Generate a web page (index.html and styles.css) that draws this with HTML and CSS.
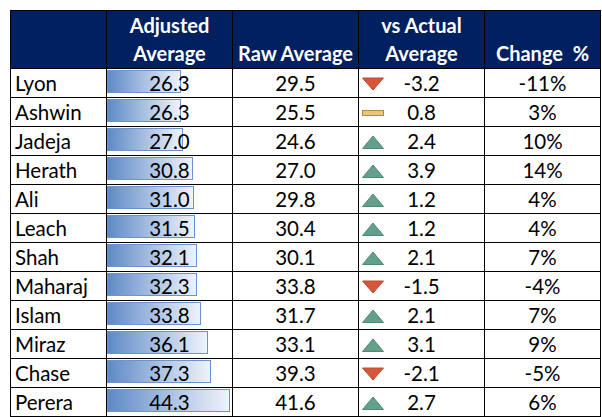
FILE: index.html
```html
<!DOCTYPE html>
<html lang="en">
<head>
<meta charset="utf-8">
<title>Adjusted Average</title>
<link rel="stylesheet" href="styles.css">
</head>
<body>
<div class="sheet">
  <div class="hd hd-name"></div>
  <div class="hd">Adjusted<br>Average</div>
  <div class="hd">Raw Average</div>
  <div class="hd">vs Actual<br>Average</div>
  <div class="hd hd-pre">Change  %</div>

  <div class="c name">Lyon</div>
  <div class="c adj"><span class="bar" style="width:74px"></span><span class="v">26.3</span></div>
  <div class="c">29.5</div>
  <div class="c vs"><svg class="ic" viewBox="0 0 22 16" width="22" height="16"><polygon class="dn" points="0.5,1 21.5,1 11,13"/></svg><span class="v">-3.2</span></div>
  <div class="c">-11%</div>

  <div class="c name">Ashwin</div>
  <div class="c adj"><span class="bar" style="width:74px"></span><span class="v">26.3</span></div>
  <div class="c">25.5</div>
  <div class="c vs"><svg class="ic" viewBox="0 0 22 16" width="22" height="16"><rect class="eq" x="0.5" y="4.5" width="21" height="5"/></svg><span class="v">0.8</span></div>
  <div class="c">3%</div>

  <div class="c name">Jadeja</div>
  <div class="c adj"><span class="bar" style="width:76px"></span><span class="v">27.0</span></div>
  <div class="c">24.6</div>
  <div class="c vs"><svg class="ic" viewBox="0 0 22 16" width="22" height="16"><polygon class="up" points="0.5,13.5 21.5,13.5 11,1"/></svg><span class="v">2.4</span></div>
  <div class="c">10%</div>

  <div class="c name">Herath</div>
  <div class="c adj"><span class="bar" style="width:86px"></span><span class="v">30.8</span></div>
  <div class="c">27.0</div>
  <div class="c vs"><svg class="ic" viewBox="0 0 22 16" width="22" height="16"><polygon class="up" points="0.5,13.5 21.5,13.5 11,1"/></svg><span class="v">3.9</span></div>
  <div class="c">14%</div>

  <div class="c name">Ali</div>
  <div class="c adj"><span class="bar" style="width:87px"></span><span class="v">31.0</span></div>
  <div class="c">29.8</div>
  <div class="c vs"><svg class="ic" viewBox="0 0 22 16" width="22" height="16"><polygon class="up" points="0.5,13.5 21.5,13.5 11,1"/></svg><span class="v">1.2</span></div>
  <div class="c">4%</div>

  <div class="c name">Leach</div>
  <div class="c adj"><span class="bar" style="width:88px"></span><span class="v">31.5</span></div>
  <div class="c">30.4</div>
  <div class="c vs"><svg class="ic" viewBox="0 0 22 16" width="22" height="16"><polygon class="up" points="0.5,13.5 21.5,13.5 11,1"/></svg><span class="v">1.2</span></div>
  <div class="c">4%</div>

  <div class="c name">Shah</div>
  <div class="c adj"><span class="bar" style="width:90px"></span><span class="v">32.1</span></div>
  <div class="c">30.1</div>
  <div class="c vs"><svg class="ic" viewBox="0 0 22 16" width="22" height="16"><polygon class="up" points="0.5,13.5 21.5,13.5 11,1"/></svg><span class="v">2.1</span></div>
  <div class="c">7%</div>

  <div class="c name">Maharaj</div>
  <div class="c adj"><span class="bar" style="width:90px"></span><span class="v">32.3</span></div>
  <div class="c">33.8</div>
  <div class="c vs"><svg class="ic" viewBox="0 0 22 16" width="22" height="16"><polygon class="dn" points="0.5,1 21.5,1 11,13"/></svg><span class="v">-1.5</span></div>
  <div class="c">-4%</div>

  <div class="c name">Islam</div>
  <div class="c adj"><span class="bar" style="width:94px"></span><span class="v">33.8</span></div>
  <div class="c">31.7</div>
  <div class="c vs"><svg class="ic" viewBox="0 0 22 16" width="22" height="16"><polygon class="up" points="0.5,13.5 21.5,13.5 11,1"/></svg><span class="v">2.1</span></div>
  <div class="c">7%</div>

  <div class="c name">Miraz</div>
  <div class="c adj"><span class="bar" style="width:101px"></span><span class="v">36.1</span></div>
  <div class="c">33.1</div>
  <div class="c vs"><svg class="ic" viewBox="0 0 22 16" width="22" height="16"><polygon class="up" points="0.5,13.5 21.5,13.5 11,1"/></svg><span class="v">3.1</span></div>
  <div class="c">9%</div>

  <div class="c name">Chase</div>
  <div class="c adj"><span class="bar" style="width:104px"></span><span class="v">37.3</span></div>
  <div class="c">39.3</div>
  <div class="c vs"><svg class="ic" viewBox="0 0 22 16" width="22" height="16"><polygon class="dn" points="0.5,1 21.5,1 11,13"/></svg><span class="v">-2.1</span></div>
  <div class="c">-5%</div>

  <div class="c name">Perera</div>
  <div class="c adj"><span class="bar" style="width:123px"></span><span class="v">44.3</span></div>
  <div class="c">41.6</div>
  <div class="c vs"><svg class="ic" viewBox="0 0 22 16" width="22" height="16"><polygon class="up" points="0.5,13.5 21.5,13.5 11,1"/></svg><span class="v">2.7</span></div>
  <div class="c">6%</div>
</div>
</body>
</html>
```

FILE: styles.css
```css
html, body {
  margin: 0;
  padding: 0;
  background: #ffffff;
}

body {
  padding: 10px 0 0 10px;
  font-family: Lato, "Liberation Sans", sans-serif;
  color: #000000;
}

.sheet {
  display: grid;
  grid-template-columns: 95px 125px 125px 125px 115px;
  grid-template-rows: 57px repeat(12, 28px);
  gap: 1px;
  padding: 1px;
  width: max-content;
  background: #000000;
}

.hd {
  background: #002060;
  color: #ffffff;
  font-weight: 700;
  font-size: 20px;
  line-height: 28px;
  text-align: center;
  display: flex;
  flex-direction: column;
  justify-content: flex-end;
  padding-bottom: 1px;
}

.hd-pre {
  white-space: pre;
}

.c {
  background: #ffffff;
  font-size: 20.5px;
  line-height: 28px;
  text-align: center;
  white-space: nowrap;
}

.name {
  text-align: left;
  padding-left: 4px;
}

.adj {
  display: grid;
}

.adj > .bar,
.adj > .v {
  grid-area: 1 / 1;
}

.bar {
  justify-self: start;
  align-self: start;
  margin-top: 1px;
  height: 23px;
  box-sizing: border-box;
  border: 1px solid #6a93d0;
  background: linear-gradient(to right, #5f8ac6 0%, #a9c0e2 50%, #eef2fa 100%);
}

.adj > .v {
  position: relative;
}

.vs {
  display: grid;
  grid-template-columns: 1fr auto 1fr;
}

.vs > .ic {
  grid-column: 1;
  justify-self: start;
  align-self: start;
  margin-top: 8px;
  margin-left: 3px;
}

.vs > .v {
  grid-column: 2;
}

.dn {
  fill: #d4573a;
  stroke: #c04a30;
  stroke-width: 1;
}

.up {
  fill: #63a08a;
  stroke: #4e8a74;
  stroke-width: 1;
}

.eq {
  fill: #ecc47e;
  stroke: #b48a3e;
  stroke-width: 1;
}
```
